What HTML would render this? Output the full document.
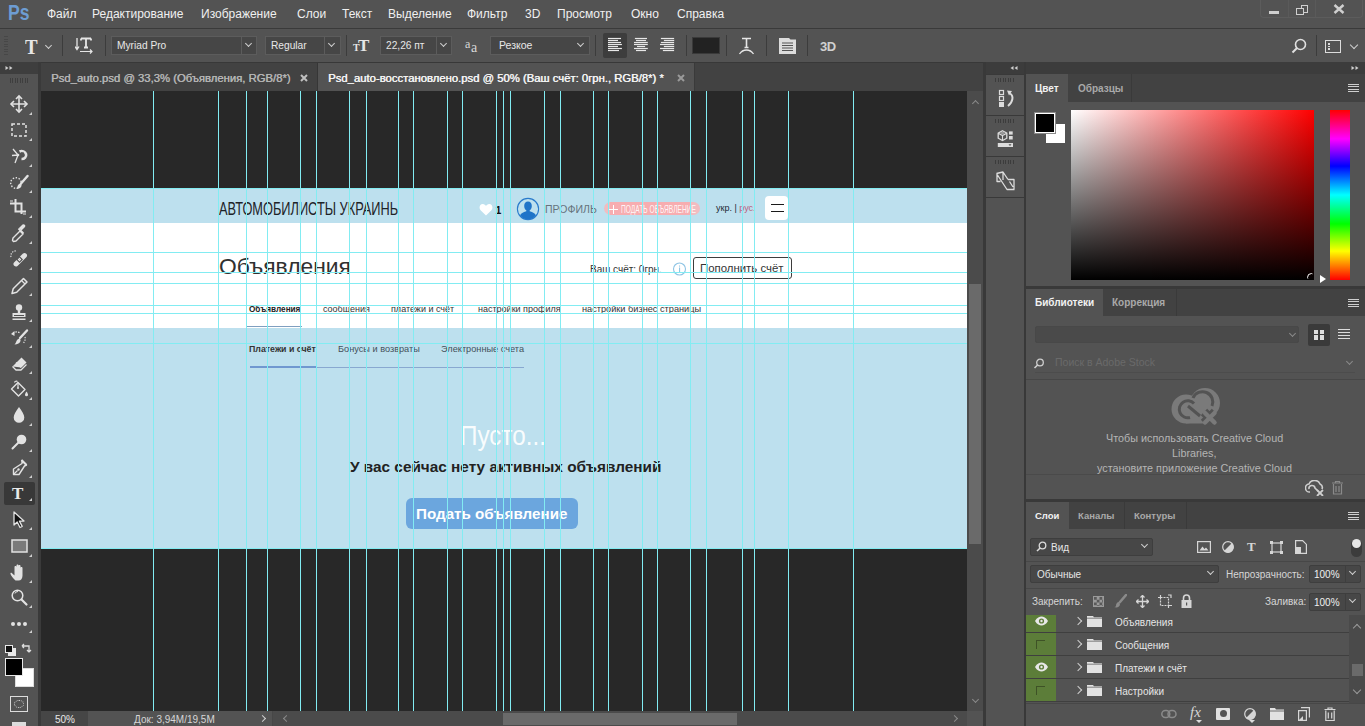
<!DOCTYPE html>
<html><head><meta charset="utf-8">
<style>
*{box-sizing:border-box;margin:0;padding:0}
html,body{width:1365px;height:726px;overflow:hidden;background:#535353;font-family:"Liberation Sans",sans-serif;color:#f0f0f0}
.a{position:absolute}
.t{position:absolute;white-space:nowrap;line-height:1}
#menu{left:0;top:0;width:1365px;height:28px;background:#535353}
#menu .t{font-size:12px;top:8px;color:#f0f0f0}
#opt{left:0;top:28px;width:1365px;height:34px;background:#535353;border-top:1px solid #3a3a3a}
.sep{position:absolute;width:1px;background:#3c3c3c}
.dd{position:absolute;background:#464646;border:1px solid #5c5c5c;height:19px}
.dd .sep{background:#5c5c5c;height:17px!important}
.dd .chev{width:5px;height:5px;top:4px}
.dd .t{font-size:11px;color:#e8e8e8;top:3px;left:5px}
.chev{position:absolute;width:6px;height:6px;border-right:1px solid #cfcfcf;border-bottom:1px solid #cfcfcf;transform:rotate(45deg)}
#tabs{left:41px;top:62px;width:926px;height:29px;background:#424242;border-top:1px solid #383838}
#canvas{left:41px;top:91px;width:926px;height:620px;background:#282828;overflow:hidden}
.gv{position:absolute;top:0;width:1px;height:620px;background:#82ecf2}
.gh{position:absolute;left:0;height:1px;width:926px;background:#82ecf2}
#tool{left:0;top:74px;width:38px;height:652px;background:#535353}
#status{left:41px;top:711px;width:942px;height:15px;background:#535353}
.pnl-tabbar{position:absolute;background:#424242}
</style></head><body>

<!-- MENU BAR -->
<div id="menu" class="a">
  <div class="t" style="left:8px;top:1.5px;font-size:22px;font-weight:700;color:#6d9dd3;transform:scaleX(0.8);transform-origin:0 0">Ps</div>
  <div class="t" style="left:47px">Файл</div>
  <div class="t" style="left:92px">Редактирование</div>
  <div class="t" style="left:201px">Изображение</div>
  <div class="t" style="left:297px">Слои</div>
  <div class="t" style="left:342px">Текст</div>
  <div class="t" style="left:388px">Выделение</div>
  <div class="t" style="left:467px">Фильтр</div>
  <div class="t" style="left:525px">3D</div>
  <div class="t" style="left:557px">Просмотр</div>
  <div class="t" style="left:631px">Окно</div>
  <div class="t" style="left:677px">Справка</div>
</div>


<!-- OPTIONS BAR -->
<div id="opt" class="a">
  <div class="a" style="left:4px;top:7px;width:4px;height:20px;background:repeating-linear-gradient(#474747 0 1px,transparent 1px 2.5px)"></div>
  <div class="t" style="left:24.5px;top:35.5px;font-size:21px;font-weight:700;font-family:'Liberation Serif',serif;color:#e6e6e6;transform:scaleX(0.9);transform-origin:0 0;margin-top:-28px">T</div>
  <div class="chev" style="left:46px;top:14px;width:5px;height:5px"></div>
  <div class="sep" style="left:62px;top:6px;height:21px"></div>
  <svg class="a" style="left:75px;top:8px" width="19" height="18" viewBox="0 0 19 18"><path d="M2 1v11M0 9.5l2 3 2-3" fill="none" stroke="#e6e6e6" stroke-width="1.3"/><path d="M6 1.5h10M11 1.5v9M9 10.5h4M6 1.5v2M16 1.5v2" stroke="#e6e6e6" stroke-width="1.8" fill="none"/><path d="M5 14.5h12M15 12.5l2 2-2 2" fill="none" stroke="#e6e6e6" stroke-width="1.2"/></svg>
  <div class="sep" style="left:105px;top:6px;height:21px"></div>
  <div class="dd" style="left:111px;top:7px;width:146px"><div class="t" style="font-size:10.2px;top:4px">Myriad Pro</div><div class="sep" style="left:129px;top:0;height:16px"></div><div class="chev" style="left:134px;top:4px"></div></div>
  <div class="dd" style="left:265px;top:7px;width:76px"><div class="t" style="font-size:10.2px;top:4px">Regular</div><div class="sep" style="left:58px;top:0;height:16px"></div><div class="chev" style="left:63px;top:4px"></div></div>
  <div class="sep" style="left:346px;top:6px;height:21px"></div>
  <div class="t" style="left:353px;top:14px;font-size:10px;font-weight:700;font-family:'Liberation Serif',serif;color:#e6e6e6">T</div>
  <div class="t" style="left:358px;top:8px;font-size:17px;font-weight:700;font-family:'Liberation Serif',serif;color:#e6e6e6">T</div>
  <div class="dd" style="left:380px;top:7px;width:72px"><div class="t" style="font-size:10.2px;top:4px">22,26 пт</div><div class="sep" style="left:55px;top:0;height:16px"></div><div class="chev" style="left:60px;top:4px"></div></div>
  <div class="t" style="left:465px;top:9px;font-size:12px;font-family:'Liberation Serif',serif;color:#d8d8d8">a</div>
  <div class="t" style="left:471px;top:12px;font-size:14px;font-family:'Liberation Serif',serif;color:#d8d8d8">a</div>
  <div class="dd" style="left:490px;top:7px;width:100px"><div class="t" style="left:8px;font-size:10.5px">Резкое</div><div class="chev" style="left:87px;top:4px"></div></div>
  <div class="sep" style="left:595px;top:6px;height:21px"></div>
  <div class="a" style="left:603px;top:4px;width:24px;height:25px;background:#3d3d3d;border-radius:2px"></div>
  <svg class="a" style="left:0;top:-29px" width="700" height="62" viewBox="0 0 700 62"><rect x="608.0" y="37.9" width="13.0" height="1.2" fill="#e8e8e8"/><rect x="608.0" y="39.9" width="10.0" height="1.2" fill="#e8e8e8"/><rect x="608.0" y="41.9" width="13.0" height="1.2" fill="#e8e8e8"/><rect x="608.0" y="43.9" width="13.9" height="1.2" fill="#e8e8e8"/><rect x="608.0" y="45.9" width="10.0" height="1.2" fill="#e8e8e8"/><rect x="608.0" y="47.9" width="13.9" height="1.2" fill="#e8e8e8"/><rect x="608.0" y="49.9" width="11.0" height="1.2" fill="#e8e8e8"/><rect x="634.9" y="37.9" width="12.1" height="1.2" fill="#e8e8e8"/><rect x="636.0" y="39.9" width="10.0" height="1.2" fill="#e8e8e8"/><rect x="634.0" y="41.9" width="13.8" height="1.2" fill="#e8e8e8"/><rect x="634.0" y="43.9" width="13.8" height="1.2" fill="#e8e8e8"/><rect x="637.0" y="45.9" width="8.1" height="1.2" fill="#e8e8e8"/><rect x="634.0" y="47.9" width="13.8" height="1.2" fill="#e8e8e8"/><rect x="636.0" y="49.9" width="10.0" height="1.2" fill="#e8e8e8"/><rect x="660.9" y="37.9" width="13.2" height="1.2" fill="#e8e8e8"/><rect x="663.9" y="39.9" width="10.3" height="1.2" fill="#e8e8e8"/><rect x="660.9" y="41.9" width="13.2" height="1.2" fill="#e8e8e8"/><rect x="660.0" y="43.9" width="14.1" height="1.2" fill="#e8e8e8"/><rect x="663.9" y="45.9" width="10.3" height="1.2" fill="#e8e8e8"/><rect x="660.0" y="47.9" width="14.1" height="1.2" fill="#e8e8e8"/><rect x="662.9" y="49.9" width="11.2" height="1.2" fill="#e8e8e8"/></svg>
  <div class="sep" style="left:686px;top:6px;height:21px"></div>
  <div class="a" style="left:692px;top:8px;width:28px;height:17px;background:#222;border:1px solid #3a3a3a"></div>
  <div class="sep" style="left:726px;top:6px;height:21px"></div>
  <svg class="a" style="left:738px;top:7px" width="17" height="19" viewBox="0 0 17 19"><path d="M4 2.5h9M8.5 2.5v9M6.5 11.5h4" stroke="#e6e6e6" stroke-width="1.6" fill="none"/><path d="M1.5 18c2-3 4-4 7-4s5 1 7 4" stroke="#e6e6e6" stroke-width="1.3" fill="none"/></svg>
  <div class="sep" style="left:766px;top:6px;height:21px"></div>
  <svg class="a" style="left:779px;top:8px" width="17" height="17" viewBox="0 0 17 17"><path d="M0 1h10l1.5 1.5H17V17H0z" fill="#dcdcdc"/><path d="M3 6h11M3 8.5h11M3 11h11M3 13.5h11" stroke="#535353" stroke-width="1.2"/></svg>
  <div class="sep" style="left:807px;top:6px;height:21px"></div>
  <div class="t" style="left:820px;top:11px;font-size:13px;font-weight:700;color:#d0d0d0;letter-spacing:-0.5px">3D</div>
  <svg class="a" style="left:1291px;top:9px" width="16" height="16" viewBox="0 0 16 16"><circle cx="9.5" cy="6.5" r="5" fill="none" stroke="#e0e0e0" stroke-width="1.6"/><path d="M6 10L1.5 14.5" stroke="#e0e0e0" stroke-width="2"/></svg>
  <div class="sep" style="left:1316px;top:6px;height:21px"></div>
  <div class="a" style="left:1325px;top:11px;width:16px;height:13px;border:1.5px solid #dcdcdc"></div>
  <div class="a" style="left:1328px;top:14px;width:2px;height:7px;background:repeating-linear-gradient(#dcdcdc 0 1.5px,transparent 1.5px 2.5px)"></div>
  <div class="chev" style="left:1351px;top:13px"></div>
</div>

<!-- LEFT TOOLBAR -->
<div class="a" style="left:1260px;top:-2px;width:103px;height:20px;border:1px solid #5c5c5c;border-top:none;border-radius:0 0 4px 4px"></div>
<div class="a" style="left:1288px;top:0;width:1px;height:17px;background:#5a5a5a"></div>
<div class="a" style="left:1315px;top:0;width:1px;height:17px;background:#5a5a5a"></div>
<div class="a" style="left:1269px;top:10.5px;width:10px;height:3px;background:#cfcfcf"></div>
<div class="a" style="left:1300.5px;top:5px;width:7.5px;height:7.5px;border:1.8px solid #cfcfcf"></div>
<div class="a" style="left:1296px;top:8px;width:8px;height:7px;border:1.8px solid #cfcfcf;background:#535353"></div>
<svg class="a" style="left:1333px;top:4px" width="12" height="10" viewBox="0 0 12 10"><path d="M1.5 1l9 8M10.5 1l-9 8" stroke="#cfcfcf" stroke-width="2.4"/></svg>

<div class="a" style="left:0;top:62px;width:38px;height:12px;background:#3e3e3e"></div>
<svg class="a" style="left:5px;top:65px" width="8" height="6" viewBox="0 0 8 6"><path d="M0.5 1l3 2-3 2zM4.5 1l3 2-3 2z" fill="#d0d0d0"/></svg>
<div id="tool" class="a">
  <div class="a" style="left:29px;top:556px;width:0;height:0;border-left:3px solid transparent;border-bottom:3px solid #cfcfcf"></div>
  <div class="a" style="left:10px;top:4px;width:20px;height:5px;background:repeating-linear-gradient(90deg,#3e3e3e 0 1px,transparent 1px 2.5px)"></div>
  <div class="a" style="left:4px;top:408px;width:31px;height:23px;background:#383838;border-radius:2px"></div>
  <div class="t" style="left:12px;top:411px;font-size:17px;font-weight:700;font-family:'Liberation Serif',serif;color:#eaeaea">T</div>
  <div class="a" style="left:29px;top:423.5px;width:0;height:0;border-left:3px solid transparent;border-bottom:3px solid #cfcfcf"></div>
<svg class="a" style="left:9px;top:20px" width="20" height="20" viewBox="0 0 20 20"><path d="M10 2v16M2 10h16" stroke="#e2e2e2" stroke-width="1.6"/><path d="M7 5l3-3 3 3M7 15l3 3 3-3M5 7l-3 3 3 3M15 7l3 3-3 3" fill="none" stroke="#e2e2e2" stroke-width="1.6"/></svg><div class="a" style="left:29px;top:37.5px;width:0;height:0;border-left:3px solid transparent;border-bottom:3px solid #cfcfcf"></div><svg class="a" style="left:9px;top:46px" width="20" height="20" viewBox="0 0 20 20"><rect x="3" y="4" width="14" height="12" fill="none" stroke="#e2e2e2" stroke-width="1.5" stroke-dasharray="3 2"/></svg><div class="a" style="left:29px;top:63.5px;width:0;height:0;border-left:3px solid transparent;border-bottom:3px solid #cfcfcf"></div><svg class="a" style="left:9px;top:72px" width="20" height="20" viewBox="0 0 20 20"><path d="M4 3l5 6M3 9.5l6-0.5M6 17l3-8" stroke="#e2e2e2" stroke-width="1.3" fill="none"/><circle cx="9" cy="9" r="1.3" fill="#e2e2e2"/><path d="M10.5 5.5a4.5 4 0 1 1 2 7.5" stroke="#e2e2e2" stroke-width="2.6" fill="none"/><rect x="12" y="6.5" width="3" height="3" fill="#535353"/></svg><div class="a" style="left:29px;top:89.5px;width:0;height:0;border-left:3px solid transparent;border-bottom:3px solid #cfcfcf"></div><svg class="a" style="left:9px;top:98px" width="20" height="20" viewBox="0 0 20 20"><circle cx="7" cy="11" r="5.3" fill="none" stroke="#e2e2e2" stroke-width="1.4" stroke-dasharray="1.4 1.6"/><path d="M18.5 4L12 11.5" stroke="#e2e2e2" stroke-width="2.4" stroke-linecap="round"/><path d="M9.5 12.5c1.5-1.5 3.5-0.5 3 1.5-0.5 2-3 3-5 3 1-1 0.5-3 2-4.5z" fill="#e2e2e2"/></svg><div class="a" style="left:29px;top:115.5px;width:0;height:0;border-left:3px solid transparent;border-bottom:3px solid #cfcfcf"></div><svg class="a" style="left:9px;top:123px" width="20" height="20" viewBox="0 0 20 20"><path d="M6.5 2v12.5H17M1 6.5h11.5V17" fill="none" stroke="#e2e2e2" stroke-width="2"/><path d="M1 4h3M14 17h3" stroke="#e2e2e2" stroke-width="1.2"/></svg><div class="a" style="left:29px;top:140.5px;width:0;height:0;border-left:3px solid transparent;border-bottom:3px solid #cfcfcf"></div><svg class="a" style="left:9px;top:149px" width="20" height="20" viewBox="0 0 20 20"><path d="M4.5 18.5l-1-1 0.5-2.5 7-7 3 3-7 7z" fill="none" stroke="#e2e2e2" stroke-width="1.4" stroke-linejoin="round"/><path d="M10 6l4 4M9.5 5.5l5 5" stroke="#e2e2e2" stroke-width="1.8"/><path d="M12.5 7.5l3.5-3.5a1.8 1.8 0 0 0-2.5-2.5L10 5z" fill="#e2e2e2"/></svg><div class="a" style="left:29px;top:166.5px;width:0;height:0;border-left:3px solid transparent;border-bottom:3px solid #cfcfcf"></div><svg class="a" style="left:9px;top:175px" width="20" height="20" viewBox="0 0 20 20"><path d="M5 13.5l9-9a2.5 2.5 0 0 1 3.5 3.5l-9 9a2.5 2.5 0 0 1-3.5-3.5z" fill="#e2e2e2"/><rect x="8" y="8" width="5" height="5" transform="rotate(45 10.5 10.5)" fill="#535353"/><circle cx="9.6" cy="10.5" r="0.8" fill="#e2e2e2"/><circle cx="11.4" cy="10.5" r="0.8" fill="#e2e2e2"/><circle cx="10.5" cy="9.6" r="0.8" fill="#e2e2e2"/><circle cx="10.5" cy="11.4" r="0.8" fill="#e2e2e2"/><path d="M2 8a5 5 0 0 1 6-6" fill="none" stroke="#e2e2e2" stroke-width="1.2" stroke-dasharray="1.2 1.3"/></svg><div class="a" style="left:29px;top:192.5px;width:0;height:0;border-left:3px solid transparent;border-bottom:3px solid #cfcfcf"></div><svg class="a" style="left:9px;top:201px" width="20" height="20" viewBox="0 0 20 20"><path d="M3 18.5l1.2-4.7L14.5 3.5l3.5 3.5L7.7 17.3z" fill="none" stroke="#e2e2e2" stroke-width="1.5" stroke-linejoin="round"/><path d="M12.5 5.5l3.5 3.5" stroke="#e2e2e2" stroke-width="1.2"/></svg><div class="a" style="left:29px;top:218.5px;width:0;height:0;border-left:3px solid transparent;border-bottom:3px solid #cfcfcf"></div><svg class="a" style="left:9px;top:227px" width="20" height="20" viewBox="0 0 20 20"><circle cx="10" cy="6.5" r="3.2" fill="#e2e2e2"/><path d="M8.8 8.5h2.4V12H8.8z" fill="#e2e2e2"/><rect x="3.5" y="12" width="13" height="4" fill="#e2e2e2"/><rect x="5" y="14" width="10" height="1" fill="#535353"/><rect x="3.5" y="17.5" width="13" height="1.5" fill="#e2e2e2"/></svg><div class="a" style="left:29px;top:244.5px;width:0;height:0;border-left:3px solid transparent;border-bottom:3px solid #cfcfcf"></div><svg class="a" style="left:9px;top:253px" width="20" height="20" viewBox="0 0 20 20"><path d="M18 3.5L11 11" stroke="#e2e2e2" stroke-width="2.4" stroke-linecap="round"/><path d="M8.5 12.5c1.5-1.5 3.5-0.5 3 1.5-0.5 2-3 3.5-6 3.5 1.5-1 1.5-3.5 3-5z" fill="#e2e2e2"/><path d="M4 6.5c2-2 5-2 7-0.5" fill="none" stroke="#e2e2e2" stroke-width="1.3" stroke-dasharray="1.5 1.2"/><path d="M2 7l3.5-3v5z" fill="#e2e2e2"/><path d="M16 10a7 7 0 0 1-1.5 6" fill="none" stroke="#e2e2e2" stroke-width="1.2" stroke-dasharray="1.2 1.3"/></svg><div class="a" style="left:29px;top:270.5px;width:0;height:0;border-left:3px solid transparent;border-bottom:3px solid #cfcfcf"></div><svg class="a" style="left:9px;top:279px" width="20" height="20" viewBox="0 0 20 20"><path d="M3.5 13.5l9-9 5 5-5 5" fill="#e2e2e2"/><path d="M3.5 13.5l3.5 3.5h5l5.5-5.5" fill="none" stroke="#e2e2e2" stroke-width="1.3" stroke-linejoin="round"/><path d="M7 9.5l5 5" stroke="#e2e2e2" stroke-width="1.3"/></svg><div class="a" style="left:29px;top:296.5px;width:0;height:0;border-left:3px solid transparent;border-bottom:3px solid #cfcfcf"></div><svg class="a" style="left:9px;top:305px" width="20" height="20" viewBox="0 0 20 20"><path d="M2.5 10l6.5-6.5 7 7-6.5 6.5z" fill="none" stroke="#e2e2e2" stroke-width="1.4" stroke-linejoin="round"/><path d="M9 3.5v5" stroke="#e2e2e2" stroke-width="1.2"/><circle cx="9" cy="9" r="1" fill="#e2e2e2"/><path d="M8.5 2.5a2 2 0 0 0-3 1" fill="none" stroke="#e2e2e2" stroke-width="1.2"/><path d="M17.5 12.5c1 1.5 1.5 2.5 1.5 3.2a1.5 1.5 0 0 1-3 0c0-0.7 0.5-1.7 1.5-3.2z" fill="#e2e2e2"/></svg><div class="a" style="left:29px;top:322.5px;width:0;height:0;border-left:3px solid transparent;border-bottom:3px solid #cfcfcf"></div><svg class="a" style="left:9px;top:331px" width="20" height="20" viewBox="0 0 20 20"><path d="M10 2c-3 4.5-5.3 7.5-5.3 10.5a5.3 5.3 0 0 0 10.6 0C15.3 9.5 13 6.5 10 2z" fill="#e2e2e2"/></svg><div class="a" style="left:29px;top:348.5px;width:0;height:0;border-left:3px solid transparent;border-bottom:3px solid #cfcfcf"></div><svg class="a" style="left:9px;top:357px" width="20" height="20" viewBox="0 0 20 20"><circle cx="12.5" cy="8.5" r="4.8" fill="#e2e2e2"/><path d="M9.5 11.5L3.5 17.5" stroke="#e2e2e2" stroke-width="2" stroke-linecap="round"/></svg><div class="a" style="left:29px;top:374.5px;width:0;height:0;border-left:3px solid transparent;border-bottom:3px solid #cfcfcf"></div><svg class="a" style="left:9px;top:383px" width="20" height="20" viewBox="0 0 20 20"><path d="M13 3.5l4.5 4.5-2 1-5.5 8.5H4.5v-5.5l8.5-5.5z" fill="none" stroke="#e2e2e2" stroke-width="1.4" stroke-linejoin="round"/><path d="M4.5 17.5l4-4" stroke="#e2e2e2" stroke-width="1.1"/><circle cx="9.5" cy="12.5" r="1.2" fill="#e2e2e2"/><path d="M12.5 3l5 5" stroke="#e2e2e2" stroke-width="2"/></svg><div class="a" style="left:29px;top:400.5px;width:0;height:0;border-left:3px solid transparent;border-bottom:3px solid #cfcfcf"></div><svg class="a" style="left:9px;top:435px" width="20" height="20" viewBox="0 0 20 20"><path d="M5 3v13l3.2-3 2.8 5.5 2.2-1.1-2.8-5.3H15z" fill="#111" stroke="#e2e2e2" stroke-width="1.3" stroke-linejoin="round"/></svg><div class="a" style="left:29px;top:452.5px;width:0;height:0;border-left:3px solid transparent;border-bottom:3px solid #cfcfcf"></div><svg class="a" style="left:9px;top:462px" width="20" height="20" viewBox="0 0 20 20"><rect x="3" y="4" width="15" height="12" fill="#7a7a7a" stroke="#e2e2e2" stroke-width="1.5"/></svg><div class="a" style="left:29px;top:479.5px;width:0;height:0;border-left:3px solid transparent;border-bottom:3px solid #cfcfcf"></div><svg class="a" style="left:9px;top:488px" width="20" height="20" viewBox="0 0 20 20"><path d="M6.5 18.5C4.5 17 2 13.5 1.5 12c-0.3-1 0.7-1.5 1.5-0.8L5.5 13.5V5c0-1.3 2-1.3 2 0v6V3.5c0-1.3 2-1.3 2 0V11V4c0-1.3 2-1.3 2 0v7V6c0-1.3 2-1.3 2 0v7.5c0 3-1.5 5-4 5z" fill="#e2e2e2"/></svg><div class="a" style="left:29px;top:505.5px;width:0;height:0;border-left:3px solid transparent;border-bottom:3px solid #cfcfcf"></div><svg class="a" style="left:9px;top:513px" width="20" height="20" viewBox="0 0 20 20"><circle cx="8.5" cy="8.5" r="5.3" fill="none" stroke="#e2e2e2" stroke-width="1.5"/><path d="M12.5 12.5l5 5" stroke="#e2e2e2" stroke-width="2.2" stroke-linecap="round"/><path d="M6 6.5a3 3 0 0 1 3-2" fill="none" stroke="#e2e2e2" stroke-width="1"/></svg><div class="a" style="left:29px;top:530.5px;width:0;height:0;border-left:3px solid transparent;border-bottom:3px solid #cfcfcf"></div><svg class="a" style="left:9px;top:540px" width="20" height="20" viewBox="0 0 20 20"><circle cx="4" cy="10" r="2" fill="#e2e2e2"/><circle cx="10" cy="10" r="2" fill="#e2e2e2"/><circle cx="16" cy="10" r="2" fill="#e2e2e2"/></svg>
  <div class="a" style="left:8px;top:574px;width:8px;height:8px;background:#e8e8e8"></div>
  <div class="a" style="left:4.5px;top:570.5px;width:8px;height:8px;background:#111;border:1px solid #e8e8e8"></div>
  <svg class="a" style="left:20px;top:568px" width="12" height="12" viewBox="0 0 12 12"><path d="M2 4h7v6M2 4l2-2M2 4l2 2M9 10l-2-2M9 10l2-2" fill="none" stroke="#ddd" stroke-width="1.3"/></svg>
  <div class="a" style="left:15px;top:594px;width:19px;height:19px;background:#fff;border:1px solid #ddd"></div>
  <div class="a" style="left:5px;top:584px;width:18px;height:18px;background:#000;border:1px solid #e8e8e8"></div>
  <div class="a" style="left:10px;top:622px;width:18px;height:16px;border:1.5px solid #dcdcdc"></div>
  <div class="a" style="left:14px;top:626px;width:10px;height:8px;border:1.2px dotted #dcdcdc;border-radius:50%"></div>
  <div class="a" style="left:12px;top:648px;width:14px;height:4px;background:#dcdcdc"></div>
</div>
<div class="a" style="left:38px;top:62px;width:3px;height:664px;background:#3a3a3a"></div>

<!-- TABS -->
<div id="tabs" class="a">
  <div class="t" style="left:10px;top:9.5px;font-size:11.3px;color:#b4b4b4;text-shadow:0.4px 0 0 #b4b4b4">Psd_auto.psd @ 33,3% (Объявления, RGB/8*)</div>
  <svg class="a" style="left:259px;top:11px" width="8" height="8" viewBox="0 0 8 8"><path d="M1 1l6 6M7 1L1 7" stroke="#c0c0c0" stroke-width="2"/></svg>
  <div class="a" style="left:276px;top:0;width:1px;height:29px;background:#363636"></div>
  <div class="a" style="left:277px;top:0;width:376px;height:29px;background:#535353"></div>
  <div class="t" style="left:287px;top:9.5px;font-size:11.3px;color:#f4f4f4;text-shadow:0.4px 0 0 #f4f4f4">Psd_auto-восстановлено.psd @ 50% (Ваш счёт: 0грн., RGB/8*) *</div>
  <svg class="a" style="left:636px;top:11px" width="8" height="8" viewBox="0 0 8 8"><path d="M1 1l6 6M7 1L1 7" stroke="#9a9a9a" stroke-width="2"/></svg>
  <div class="a" style="left:653px;top:0;width:1px;height:29px;background:#3a3a3a"></div>
</div>

<!-- CANVAS -->
<div id="canvas" class="a">
 <div class="a" style="left:-41px;top:-91px;width:1365px;height:726px">
  <!-- document -->
  <div class="a" style="left:41px;top:188px;width:926px;height:35px;background:#bde0ee"></div>
  <div class="a" style="left:41px;top:223px;width:926px;height:105px;background:#ffffff"></div>
  <div class="a" style="left:41px;top:328px;width:926px;height:220px;background:#bde0ee"></div>
  <!-- header -->
  <div class="t" style="left:219px;top:200px;font-size:18px;color:#1e2328;transform:scaleX(0.71);transform-origin:0 0">АВТОМОБИЛИСТЫ УКРАИНЬ</div>
  <svg class="a" style="left:479px;top:203px" width="14" height="13" viewBox="0 0 14 13"><path d="M7 12.5 L1.6 7.2 C-0.4 5.2 0.6 1 3.8 1 C5.4 1 6.4 2 7 3 C7.6 2 8.6 1 10.2 1 C13.4 1 14.4 5.2 12.4 7.2 Z" fill="#fff"/></svg>
  <div class="t" style="left:495.5px;top:204.5px;font-size:10.5px;font-weight:700;color:#111">1</div>
  <svg class="a" style="left:516px;top:197px" width="24" height="24" viewBox="0 0 24 24"><circle cx="12" cy="12" r="10.6" fill="none" stroke="#2a7bcc" stroke-width="1.1"/><path d="M12 4.6c2.4 0 3.8 1.9 3.8 4.3 0 2-1 3.7-2.1 4.4v.9c3.2.8 5.6 2.2 6.2 4.2A10 10 0 0 1 12 22a10 10 0 0 1-7.9-3.6c.6-2 3-3.4 6.2-4.2v-.9C9.2 12.6 8.2 10.9 8.2 8.9c0-2.4 1.4-4.3 3.8-4.3z" fill="#1f74c8"/></svg>
  <div class="t" style="left:545px;top:204px;font-size:10.5px;color:#66737c;transform:scaleX(1.0);transform-origin:0 0">ПРОФИЛЬ</div>
  <div class="a" style="left:604px;top:202px;width:96px;height:13px;border-radius:7px;background:#f2bcc0"></div>
  <div class="a" style="left:610px;top:202px;width:33px;height:13px;background:#f7adb0"></div>
  <div class="a" style="left:644px;top:202px;width:12px;height:13px;background:#f7adb0"></div>
  <div class="a" style="left:658px;top:202px;width:33px;height:13px;background:#f7adb0"></div>
  <div class="a" style="left:609px;top:208.5px;width:9px;height:1px;background:#fff"></div><div class="a" style="left:613px;top:205px;width:1px;height:9px;background:#fff"></div>
  <div class="t" style="left:620.5px;top:204.4px;font-size:10.5px;color:rgba(255,255,255,0.9);transform:scaleX(0.635);transform-origin:0 0">ПОДАТЬ ОБЪЯВЛЕНИЕ</div>
  <div class="t" style="left:716px;top:204px;font-size:9px;color:#1d2a35">укр. | <span style="color:#b8637f">рус.</span></div>
  <div class="a" style="left:765px;top:196px;width:23px;height:24px;border-radius:4px;background:#fff"></div>
  <div class="a" style="left:771px;top:204px;width:13px;height:1.2px;background:#1a1a1a"></div>
  <div class="a" style="left:771px;top:211px;width:13px;height:1.2px;background:#1a1a1a"></div>
  <!-- title row -->
  <div class="t" style="left:219px;top:255.3px;font-size:22.8px;color:#303030">Объявления</div>
  <div class="t" style="left:590px;top:265px;font-size:10px;color:#333">Ваш счёт: 0грн.</div>
  <svg class="a" style="left:672px;top:262px" width="15" height="14" viewBox="0 0 15 14"><circle cx="7.5" cy="7" r="6" fill="none" stroke="#8ec4e4" stroke-width="1.1"/><rect x="7" y="5.5" width="1.1" height="4.5" fill="#8ec4e4"/><rect x="7" y="3.5" width="1.1" height="1.1" fill="#8ec4e4"/></svg>
  <div class="a" style="left:693px;top:257px;width:99px;height:22px;border:1.7px solid #3d3d3d;border-radius:3px;background:#fff"></div>
  <div class="t" style="left:700px;top:263px;font-size:11.4px;color:#333">Пополнить счёт</div>
  <!-- nav -->
  <div class="t" style="left:249px;top:305.5px;font-size:8.2px;font-weight:700;color:#222">Объявления</div>
  <div class="t" style="left:323px;top:304.5px;font-size:9px;color:#333">сообщения</div>
  <div class="t" style="left:391px;top:304.5px;font-size:9px;color:#333">платежи и счёт</div>
  <div class="t" style="left:478px;top:304.5px;font-size:9px;color:#333">настройки профиля</div>
  <div class="t" style="left:582px;top:304.5px;font-size:9.2px;color:#333">настройки бизнес страницы</div>
  <div class="a" style="left:247px;top:326px;width:55px;height:1px;background:#7f9fc0"></div>
  <!-- sub nav -->
  <div class="t" style="left:249px;top:345px;font-size:8.8px;font-weight:700;color:#333">Платежи и счёт</div>
  <div class="t" style="left:338px;top:345px;font-size:9.2px;color:#44505a">Бонусы и возвраты</div>
  <div class="t" style="left:441px;top:345px;font-size:9.2px;color:#44505a">Электронные счета</div>
  <div class="a" style="left:250px;top:366px;width:66px;height:2px;background:#7098d0"></div>
  <div class="a" style="left:316px;top:367px;width:208px;height:1px;background:#88a8d0"></div>
  <!-- empty state -->
  <div class="t" style="left:460px;top:423px;font-size:27px;color:rgba(255,255,255,0.92);transform:scaleX(0.9);transform-origin:0 0">Пусто...</div>
  <div class="t" style="left:350px;top:459px;font-size:15.35px;font-weight:700;color:#222">У вас сейчас нету активных объявлений</div>
  <div class="a" style="left:406px;top:498px;width:172px;height:31px;border-radius:6px;background:#6ba6de"></div>
  <div class="t" style="left:416px;top:506px;font-size:15.2px;font-weight:700;color:#fff">Подать объявление</div>
  <!-- guides -->
<div class="gv" style="top:91px;left:153px"></div><div class="gv" style="top:91px;left:218px"></div><div class="gv" style="top:91px;left:246px"></div><div class="gv" style="top:91px;left:267px"></div><div class="gv" style="top:91px;left:300px"></div><div class="gv" style="top:91px;left:316px"></div><div class="gv" style="top:91px;left:349px"></div><div class="gv" style="top:91px;left:366px"></div><div class="gv" style="top:91px;left:398px"></div><div class="gv" style="top:91px;left:413px"></div><div class="gv" style="top:91px;left:447px"></div><div class="gv" style="top:91px;left:462px"></div><div class="gv" style="top:91px;left:496px"></div><div class="gv" style="top:91px;left:503px"></div><div class="gv" style="top:91px;left:510px"></div><div class="gv" style="top:91px;left:544px"></div><div class="gv" style="top:91px;left:560px"></div><div class="gv" style="top:91px;left:593px"></div><div class="gv" style="top:91px;left:608px"></div><div class="gv" style="top:91px;left:642px"></div><div class="gv" style="top:91px;left:657px"></div><div class="gv" style="top:91px;left:690px"></div><div class="gv" style="top:91px;left:706px"></div><div class="gv" style="top:91px;left:742px"></div><div class="gv" style="top:91px;left:754px"></div><div class="gv" style="top:91px;left:788px"></div><div class="gv" style="top:91px;left:853px"></div><div class="gh" style="left:41px;top:188px"></div><div class="gh" style="left:41px;top:252px"></div><div class="gh" style="left:41px;top:272px"></div><div class="gh" style="left:41px;top:283px"></div><div class="gh" style="left:41px;top:305px"></div><div class="gh" style="left:41px;top:313px"></div><div class="gh" style="left:41px;top:343px"></div><div class="gh" style="left:41px;top:548px"></div>
 </div>
</div>

<!-- SCROLLBARS / STATUS -->
<div id="status" class="a">
  <div class="a" style="left:0;top:0;width:47px;height:15px;background:#464646"></div>
  <div class="t" style="left:14px;top:4px;font-size:10px;color:#e8e8e8">50%</div>
  <div class="t" style="left:93px;top:4px;font-size:10px;color:#d6d6d6">Док: 3,94M/19,5M</div>
  <div class="a" style="left:219px;top:5px;width:5px;height:5px;border-right:1px solid #d0d0d0;border-top:1px solid #d0d0d0;transform:rotate(45deg)"></div>
  <div class="a" style="left:231px;top:0;width:1px;height:15px;background:#474747"></div>
  <div class="a" style="left:232px;top:0;width:694px;height:15px;background:#4b4b4b"></div>
  <div class="a" style="left:243px;top:5px;width:5px;height:5px;border-left:1px solid #8a8a8a;border-bottom:1px solid #8a8a8a;transform:rotate(45deg)"></div>
  <div class="a" style="left:462px;top:2px;width:234px;height:12px;background:#6a6a6a"></div>
  <div class="a" style="left:911px;top:5px;width:5px;height:5px;border-right:1px solid #8a8a8a;border-top:1px solid #8a8a8a;transform:rotate(45deg)"></div>
  <div class="a" style="left:926px;top:0;width:16px;height:15px;background:#535353"></div>
</div>
<!-- V SCROLL -->
<div class="a" style="left:967px;top:91px;width:16px;height:620px;background:#4b4b4b"></div>
<div class="a" style="left:973px;top:101px;width:5px;height:5px;border-left:1px solid #8a8a8a;border-top:1px solid #8a8a8a;transform:rotate(45deg)"></div>
<div class="a" style="left:969px;top:284px;width:12px;height:260px;background:#6a6a6a"></div>
<div class="a" style="left:973px;top:697px;width:5px;height:5px;border-right:1px solid #8a8a8a;border-bottom:1px solid #8a8a8a;transform:rotate(45deg)"></div>
<div class="a" style="left:967px;top:62px;width:16px;height:29px;background:#424242;border-top:1px solid #383838"></div>



<!-- RIGHT DOCK -->
<div class="a" style="left:983px;top:62px;width:3px;height:664px;background:#393939"></div>
<div class="a" style="left:986px;top:62px;width:38px;height:12px;background:#3c3c3c"></div>
<svg class="a" style="left:1010px;top:65px" width="8" height="6" viewBox="0 0 8 6"><path d="M3.5 1l-3 2 3 2zM7.5 1l-3 2 3 2z" fill="#d0d0d0"/></svg>
<div class="a" style="left:986px;top:74px;width:38px;height:652px;background:#535353;border-top:1px solid #393939"></div>
<div class="a" style="left:986px;top:115px;width:38px;height:1px;background:#393939"></div>
<div class="a" style="left:986px;top:156px;width:38px;height:1px;background:#393939"></div>
<div class="a" style="left:986px;top:197px;width:38px;height:1px;background:#393939"></div>
<div class="a" style="left:995px;top:78px;width:20px;height:4px;background:repeating-linear-gradient(90deg,#3c3c3c 0 1px,transparent 1px 2.5px)"></div>
<div class="a" style="left:995px;top:119px;width:20px;height:4px;background:repeating-linear-gradient(90deg,#3c3c3c 0 1px,transparent 1px 2.5px)"></div>
<div class="a" style="left:995px;top:160px;width:20px;height:4px;background:repeating-linear-gradient(90deg,#3c3c3c 0 1px,transparent 1px 2.5px)"></div>
<svg class="a" style="left:998px;top:89px" width="18" height="19" viewBox="0 0 18 19"><rect x="1.5" y="1.5" width="4" height="4" fill="none" stroke="#dcdcdc" stroke-width="1.2"/><rect x="1.5" y="7.5" width="4" height="4" fill="none" stroke="#dcdcdc" stroke-width="1.2"/><rect x="1" y="13" width="5" height="5" fill="#dcdcdc"/><path d="M10 17C15 13 16 7 12 4.5" fill="none" stroke="#dcdcdc" stroke-width="2"/><path d="M9 1.5l5 0.5-3 4.5z" fill="#dcdcdc"/></svg>
<svg class="a" style="left:996px;top:129px" width="18" height="20" viewBox="0 0 18 20"><path d="M6.5 1.8l4.3 2.4v5l-4.3 2.4-4.3-2.4v-5z" fill="none" stroke="#dcdcdc" stroke-width="1.3"/><path d="M2.2 4.2l4.3 2.4 4.3-2.4M6.5 6.6v5" stroke="#dcdcdc" stroke-width="1.1" fill="none"/><path d="M3.5 4l3-1.5 3 1.5-3 1.5z" fill="#9a9a9a"/><rect x="13" y="2.4" width="3.7" height="3.2" fill="#dcdcdc"/><rect x="13" y="7" width="3.7" height="3.5" fill="#dcdcdc"/><rect x="1.8" y="14" width="15.2" height="4" fill="#dcdcdc"/><path d="M12.5 15.2h3l-1.5 1.8z" fill="#535353"/></svg>
<svg class="a" style="left:995px;top:170px" width="21" height="21" viewBox="0 0 21 21"><path d="M1.5 3.5L8 2l5 7.5M1.5 3.5L12 19.5h7.5M2 4v7.5h3.5M13 9.5h6v10M14.5 11.5l3.5 5.5M8 2v8" stroke="#dcdcdc" stroke-width="1.3" fill="none" stroke-linejoin="round"/></svg>
<div class="a" style="left:1024px;top:62px;width:2px;height:664px;background:#393939"></div>
<div class="a" style="left:1026px;top:62px;width:339px;height:12px;background:#3c3c3c"></div>
<svg class="a" style="left:1351px;top:65px" width="8" height="6" viewBox="0 0 8 6"><path d="M0.5 1l3 2-3 2zM4.5 1l3 2-3 2z" fill="#d0d0d0"/></svg>

<!-- COLOR PANEL -->
<div class="a" style="left:1026px;top:74px;width:339px;height:28px;background:#424242"></div>
<div class="a" style="left:1026px;top:74px;width:42px;height:28px;background:#535353"></div>
<div class="a" style="left:1131px;top:74px;width:1px;height:28px;background:#3a3a3a"></div>
<div class="t" style="left:1035px;top:84px;font-size:10px;font-weight:700;color:#f2f2f2">Цвет</div>
<div class="t" style="left:1078px;top:84px;font-size:10px;font-weight:700;color:#a9a9a9">Образцы</div>
<div class="a" style="left:1348px;top:84px;width:11px;height:8px;background:repeating-linear-gradient(#cfcfcf 0 1px,transparent 1px 2.33px)"></div>
<div class="a" style="left:1026px;top:102px;width:339px;height:184px;background:#535353"></div>
<div class="a" style="left:1046px;top:124px;width:19px;height:19px;background:#fff"></div>
<div class="a" style="left:1035px;top:113px;width:20px;height:20px;background:#000;border:1px solid #fff;outline:1px solid #8a8a8a"></div>
<div class="a" style="left:1071px;top:110px;width:243px;height:170px;background:linear-gradient(to top,#000,rgba(0,0,0,0)),linear-gradient(to right,#fff,#f00)"></div>
<div class="a" style="left:1307px;top:273px;width:9px;height:9px;border:1.2px solid #fff;border-radius:50%;clip-path:polygon(0 0,60% 0,60% 60%,0 60%)"></div>
<div class="a" style="left:1330px;top:110px;width:20px;height:170px;background:linear-gradient(#f00 0%,#f0f 17%,#00f 33%,#0ff 50%,#0f0 67%,#ff0 83%,#f00 100%)"></div>
<div class="a" style="left:1320px;top:275px;width:0;height:0;border-top:4px solid transparent;border-bottom:4px solid transparent;border-left:6px solid #fff"></div>
<div class="a" style="left:1026px;top:286px;width:339px;height:3px;background:#393939"></div>

<!-- LIBRARIES PANEL -->
<div class="a" style="left:1026px;top:289px;width:339px;height:27px;background:#424242"></div>
<div class="a" style="left:1026px;top:289px;width:77px;height:27px;background:#535353"></div>
<div class="a" style="left:1176px;top:289px;width:1px;height:27px;background:#3a3a3a"></div>
<div class="t" style="left:1035px;top:298px;font-size:10px;font-weight:700;color:#f2f2f2">Библиотеки</div>
<div class="t" style="left:1112px;top:298px;font-size:10px;font-weight:700;color:#a9a9a9">Коррекция</div>
<div class="a" style="left:1348px;top:299px;width:11px;height:8px;background:repeating-linear-gradient(#cfcfcf 0 1px,transparent 1px 2.33px)"></div>
<div class="a" style="left:1026px;top:316px;width:339px;height:158px;background:#535353"></div>
<div class="a" style="left:1035px;top:326px;width:264px;height:17px;background:#4a4a4a;border:1px solid #484848;border-radius:2px"></div>
<div class="chev" style="left:1290px;top:331px;width:5px;height:5px;border-color:#8a8a8a"></div>
<div class="a" style="left:1308px;top:324px;width:22px;height:22px;background:#3a3a3a;border-radius:2px"></div>
<div class="a" style="left:1314px;top:330px;width:10px;height:10px;background:linear-gradient(90deg,transparent 45%,#3a3a3a 45% 55%,transparent 55%),linear-gradient(transparent 45%,#3a3a3a 45% 55%,transparent 55%),#dcdcdc"></div>
<div class="a" style="left:1338px;top:329px;width:12px;height:11px;background:repeating-linear-gradient(#dcdcdc 0 1.5px,transparent 1.5px 3px)"></div>
<svg class="a" style="left:1033px;top:358px" width="12" height="11" viewBox="0 0 12 11"><circle cx="7" cy="4.5" r="3.3" fill="none" stroke="#cfcfcf" stroke-width="1.3"/><path d="M4.6 7L1.5 10" stroke="#cfcfcf" stroke-width="1.6"/></svg>
<div class="t" style="left:1055px;top:357px;font-size:10.5px;color:#6a6a6a">Поиск в Adobe Stock</div>
<div class="chev" style="left:1347px;top:359px;width:5px;height:5px;border-color:#8a8a8a"></div>
<div class="a" style="left:1035px;top:372px;width:320px;height:1px;background:#4c4c4c"></div>
<div class="a" style="left:1026px;top:379px;width:339px;height:1px;background:#474747"></div>
<svg class="a" style="left:1170px;top:386px" width="52" height="42" viewBox="0 0 52 42"><circle cx="16" cy="23" r="14.5" fill="#7a7a7a"/><circle cx="35" cy="17" r="15" fill="#7a7a7a"/><rect x="16" y="17" width="19" height="20.5" fill="#7a7a7a"/><path d="M24 17.5A8.5 8.5 0 1 0 20 31.5" fill="none" stroke="#535353" stroke-width="3"/><path d="M23 12A10 10 0 0 1 42 20" fill="none" stroke="#535353" stroke-width="3"/><path d="M18 20L30 30" stroke="#535353" stroke-width="3"/><path d="M34 26l11 11M45 26L34 37" stroke="#535353" stroke-width="9"/><path d="M35 27l9.5 9.5M44.5 27L35 36.5" stroke="#7a7a7a" stroke-width="4.5" stroke-linecap="round"/></svg>
<div class="t" style="left:1106px;top:433px;font-size:10.8px;color:#b5b5b5">Чтобы использовать Creative Cloud</div>
<div class="t" style="left:1172px;top:448px;font-size:10.8px;color:#b5b5b5">Libraries,</div>
<div class="t" style="left:1097px;top:463px;font-size:10.8px;color:#b5b5b5">установите приложение Creative Cloud</div>
<div class="a" style="left:1026px;top:474px;width:339px;height:25px;background:#535353;border-top:1px solid #4a4a4a"></div>
<svg class="a" style="left:1305px;top:480px" width="19" height="16" viewBox="0 0 19 16"><path d="M5 12a4 4 0 0 1-1-8A6 6 0 0 1 15 4a4 4 0 0 1 2 5" fill="none" stroke="#cfcfcf" stroke-width="1.6"/><path d="M4 9a3 3 0 0 1 6-1l3 3" fill="none" stroke="#cfcfcf" stroke-width="1.6"/><path d="M12 10l6 6M18 10l-6 6" stroke="#cfcfcf" stroke-width="1.8"/></svg>
<svg class="a" style="left:1331px;top:480px" width="13" height="15" viewBox="0 0 13 15"><path d="M1 3h11M4.5 3V1.5h4V3M2.5 4v10h8V4M5 6v6M8 6v6" fill="none" stroke="#8a8a8a" stroke-width="1.2"/></svg>
<div class="a" style="left:1026px;top:499px;width:339px;height:3px;background:#393939"></div>


<!-- LAYERS PANEL -->
<div class="a" style="left:1026px;top:502px;width:339px;height:27px;background:#424242"></div>
<div class="a" style="left:1026px;top:502px;width:43px;height:27px;background:#535353"></div>
<div class="a" style="left:1124px;top:502px;width:1px;height:27px;background:#3a3a3a"></div>
<div class="a" style="left:1186px;top:502px;width:1px;height:27px;background:#3a3a3a"></div>
<div class="t" style="left:1035px;top:511px;font-size:9.5px;font-weight:700;color:#f2f2f2">Слои</div>
<div class="t" style="left:1078px;top:511px;font-size:9.5px;font-weight:700;color:#a9a9a9">Каналы</div>
<div class="t" style="left:1134px;top:511px;font-size:9.5px;font-weight:700;color:#a9a9a9">Контуры</div>
<div class="a" style="left:1348px;top:512px;width:11px;height:8px;background:repeating-linear-gradient(#cfcfcf 0 1px,transparent 1px 2.33px)"></div>
<div class="a" style="left:1026px;top:529px;width:339px;height:197px;background:#535353"></div>
<div class="a" style="left:1030px;top:538px;width:123px;height:18px;background:#474747;border:1px solid #3e3e3e;border-radius:2px"></div>
<svg class="a" style="left:1036px;top:541px" width="11" height="11" viewBox="0 0 11 11"><circle cx="6.5" cy="4.5" r="3.3" fill="none" stroke="#dcdcdc" stroke-width="1.3"/><path d="M4.2 7L1 10" stroke="#dcdcdc" stroke-width="1.6"/></svg>
<div class="t" style="left:1051px;top:543px;font-size:10px;color:#e6e6e6">Вид</div>
<div class="chev" style="left:1142px;top:542px;width:5px;height:5px"></div>
<svg class="a" style="left:1197px;top:541px" width="14" height="12" viewBox="0 0 14 12"><rect x="0.6" y="0.6" width="12.8" height="10.8" fill="none" stroke="#d6d6d6" stroke-width="1.2"/><path d="M2.5 9.5l3-4 2 2.5 1.5-1.5 2.5 3z" fill="#d6d6d6"/></svg>
<svg class="a" style="left:1222px;top:541px" width="12" height="12" viewBox="0 0 12 12"><circle cx="6" cy="6" r="5.3" fill="none" stroke="#d6d6d6" stroke-width="1.2"/><path d="M10 2L2 10A5.3 5.3 0 0 0 10 2z" fill="#d6d6d6"/></svg>
<div class="t" style="left:1247px;top:540px;font-size:13px;font-weight:700;font-family:'Liberation Serif',serif;color:#d6d6d6">T</div>
<svg class="a" style="left:1270px;top:541px" width="13" height="13" viewBox="0 0 13 13"><rect x="2" y="2" width="9" height="9" fill="none" stroke="#d6d6d6" stroke-width="1.2"/><rect x="0" y="0" width="3" height="3" fill="#d6d6d6"/><rect x="10" y="0" width="3" height="3" fill="#d6d6d6"/><rect x="0" y="10" width="3" height="3" fill="#d6d6d6"/><rect x="10" y="10" width="3" height="3" fill="#d6d6d6"/></svg>
<svg class="a" style="left:1295px;top:540px" width="12" height="14" viewBox="0 0 12 14"><path d="M0.6 0.6h7l3.8 3.8v9H0.6z" fill="none" stroke="#d6d6d6" stroke-width="1.2"/><rect x="0" y="7" width="6" height="7" fill="#d6d6d6"/></svg>
<div class="a" style="left:1351px;top:539px;width:11px;height:18px;border-radius:6px;background:#3c3c3c"></div>
<div class="a" style="left:1352px;top:539px;width:9px;height:9px;border-radius:50%;background:#e6e6e6"></div>
<div class="a" style="left:1026px;top:561px;width:339px;height:1px;background:#474747"></div>
<div class="a" style="left:1030px;top:565px;width:189px;height:18px;background:#474747;border:1px solid #3e3e3e;border-radius:2px"></div>
<div class="t" style="left:1037px;top:570px;font-size:10px;color:#e6e6e6">Обычные</div>
<div class="chev" style="left:1208px;top:569px;width:5px;height:5px"></div>
<div class="t" style="left:1226px;top:570px;font-size:10px;color:#d6d6d6">Непрозрачность:</div>
<div class="a" style="left:1309px;top:565px;width:52px;height:18px;background:#474747;border:1px solid #3e3e3e;border-radius:2px"></div>
<div class="a" style="left:1345px;top:565px;width:1px;height:18px;background:#3e3e3e"></div>
<div class="t" style="left:1314px;top:570px;font-size:10px;color:#f0f0f0">100%</div>
<div class="chev" style="left:1350px;top:569px;width:5px;height:5px"></div>
<div class="a" style="left:1026px;top:588px;width:339px;height:1px;background:#474747"></div>
<div class="t" style="left:1032px;top:597px;font-size:10px;color:#d6d6d6">Закрепить:</div>
<div class="a" style="left:1093px;top:596px;width:11px;height:11px;background:conic-gradient(#9a9a9a 25%,#5a5a5a 0 50%,#9a9a9a 0 75%,#5a5a5a 0);background-size:5.5px 5.5px;border:1px solid #9a9a9a"></div>
<svg class="a" style="left:1114px;top:594px" width="13" height="14" viewBox="0 0 13 14"><path d="M12 1L6 8" stroke="#8a8a8a" stroke-width="2.6" stroke-linecap="round"/><path d="M5 8c-2 0-3 2-3 3.5S1 13 0 13c3 1 6 0 6-3z" fill="#8a8a8a"/></svg>
<svg class="a" style="left:1136px;top:595px" width="13" height="13" viewBox="0 0 13 13"><path d="M6.5 0.5v12M0.5 6.5h12" stroke="#d6d6d6" stroke-width="1.3"/><path d="M4.5 2.5l2-2 2 2M4.5 10.5l2 2 2-2M2.5 4.5l-2 2 2 2M10.5 4.5l2 2-2 2" fill="none" stroke="#d6d6d6" stroke-width="1.3"/></svg>
<svg class="a" style="left:1158px;top:594px" width="14" height="14" viewBox="0 0 14 14"><rect x="2.5" y="3.5" width="8" height="8" fill="none" stroke="#d6d6d6" stroke-width="1.2" stroke-dasharray="2 1"/><path d="M0 3.5h3M2.5 1v3M10.5 11v3M10 11.5h4M10 1l3 0v3" stroke="#d6d6d6" stroke-width="1.2" fill="none"/></svg>
<svg class="a" style="left:1181px;top:594px" width="11" height="14" viewBox="0 0 11 14"><path d="M2.5 6V4a3 3 0 0 1 6 0v2" fill="none" stroke="#d6d6d6" stroke-width="1.6"/><rect x="0.5" y="6" width="10" height="8" fill="#d6d6d6"/><rect x="5" y="8.5" width="1.2" height="3" fill="#535353"/></svg>
<div class="t" style="left:1265px;top:597px;font-size:10px;color:#d6d6d6">Заливка:</div>
<div class="a" style="left:1309px;top:593px;width:52px;height:18px;background:#474747;border:1px solid #3e3e3e;border-radius:2px"></div>
<div class="a" style="left:1345px;top:593px;width:1px;height:18px;background:#3e3e3e"></div>
<div class="t" style="left:1314px;top:598px;font-size:10px;color:#f0f0f0">100%</div>
<div class="chev" style="left:1350px;top:597px;width:5px;height:5px"></div>
<div class="a" style="left:1026px;top:615px;width:323px;height:88px;background:#535353;overflow:hidden">
 <div class="a" style="left:-1026px;top:-615px;width:1365px;height:726px">
  <div class="a" style="left:1026px;top:610px;width:30px;height:22px;background:#5c7d39"></div><div class="a" style="left:1056px;top:610px;width:293px;height:22px;background:#535353"></div><div class="a" style="left:1026px;top:632px;width:323px;height:1px;background:#3f3f3f"></div><svg class="a" style="left:1034px;top:616px" width="15" height="10" viewBox="0 0 15 10"><path d="M1 5C3 1.5 5.5 0.5 7.5 0.5S12 1.5 14 5C12 8.5 9.5 9.5 7.5 9.5S3 8.5 1 5z" fill="#e8e8e8"/><circle cx="7.5" cy="5" r="2.6" fill="#5e7d3a"/><circle cx="7.5" cy="5" r="1.2" fill="#e8e8e8"/></svg><div class="a" style="left:1075px;top:618px;width:6px;height:6px;border-right:1px solid #cfcfcf;border-top:1px solid #cfcfcf;transform:rotate(45deg)"></div><svg class="a" style="left:1087px;top:616px" width="15" height="11" viewBox="0 0 15 11"><path d="M0 0h6l1 1.2h8V11H0z" fill="#e2e2e2"/><path d="M0 2.2h15" stroke="#535353" stroke-width="0.7"/></svg><div class="t" style="left:1115px;top:617.5px;font-size:10px;color:#e6e6e6">Объявления</div>
  <div class="a" style="left:1026px;top:633px;width:30px;height:22px;background:#5c7d39"></div><div class="a" style="left:1056px;top:633px;width:293px;height:22px;background:#535353"></div><div class="a" style="left:1026px;top:655px;width:323px;height:1px;background:#3f3f3f"></div><div class="a" style="left:1036px;top:640px;width:9px;height:9px;border-left:1px solid #3e5226;border-top:1px solid #3e5226"></div><div class="a" style="left:1075px;top:641px;width:6px;height:6px;border-right:1px solid #cfcfcf;border-top:1px solid #cfcfcf;transform:rotate(45deg)"></div><svg class="a" style="left:1087px;top:639px" width="15" height="11" viewBox="0 0 15 11"><path d="M0 0h6l1 1.2h8V11H0z" fill="#e2e2e2"/><path d="M0 2.2h15" stroke="#535353" stroke-width="0.7"/></svg><div class="t" style="left:1115px;top:640.5px;font-size:10px;color:#e6e6e6">Сообщения</div>
  <div class="a" style="left:1026px;top:656px;width:30px;height:22px;background:#5c7d39"></div><div class="a" style="left:1056px;top:656px;width:293px;height:22px;background:#535353"></div><div class="a" style="left:1026px;top:678px;width:323px;height:1px;background:#3f3f3f"></div><svg class="a" style="left:1034px;top:662px" width="15" height="10" viewBox="0 0 15 10"><path d="M1 5C3 1.5 5.5 0.5 7.5 0.5S12 1.5 14 5C12 8.5 9.5 9.5 7.5 9.5S3 8.5 1 5z" fill="#e8e8e8"/><circle cx="7.5" cy="5" r="2.6" fill="#5e7d3a"/><circle cx="7.5" cy="5" r="1.2" fill="#e8e8e8"/></svg><div class="a" style="left:1075px;top:664px;width:6px;height:6px;border-right:1px solid #cfcfcf;border-top:1px solid #cfcfcf;transform:rotate(45deg)"></div><svg class="a" style="left:1087px;top:662px" width="15" height="11" viewBox="0 0 15 11"><path d="M0 0h6l1 1.2h8V11H0z" fill="#e2e2e2"/><path d="M0 2.2h15" stroke="#535353" stroke-width="0.7"/></svg><div class="t" style="left:1115px;top:663.5px;font-size:10px;color:#e6e6e6">Платежи и счёт</div>
  <div class="a" style="left:1026px;top:679px;width:30px;height:22px;background:#5c7d39"></div><div class="a" style="left:1056px;top:679px;width:293px;height:22px;background:#535353"></div><div class="a" style="left:1026px;top:701px;width:323px;height:1px;background:#3f3f3f"></div><div class="a" style="left:1036px;top:686px;width:9px;height:9px;border-left:1px solid #3e5226;border-top:1px solid #3e5226"></div><div class="a" style="left:1075px;top:687px;width:6px;height:6px;border-right:1px solid #cfcfcf;border-top:1px solid #cfcfcf;transform:rotate(45deg)"></div><svg class="a" style="left:1087px;top:685px" width="15" height="11" viewBox="0 0 15 11"><path d="M0 0h6l1 1.2h8V11H0z" fill="#e2e2e2"/><path d="M0 2.2h15" stroke="#535353" stroke-width="0.7"/></svg><div class="t" style="left:1115px;top:686.5px;font-size:10px;color:#e6e6e6">Настройки</div>
 </div>
</div>
<div class="a" style="left:1349px;top:615px;width:16px;height:88px;background:#4a4a4a"></div>
<div class="a" style="left:1354px;top:625px;width:6px;height:6px;border-left:1px solid #9a9a9a;border-top:1px solid #9a9a9a;transform:rotate(45deg)"></div>
<div class="a" style="left:1352px;top:664px;width:11px;height:12px;background:#6a6a6a"></div>
<div class="a" style="left:1354px;top:687px;width:6px;height:6px;border-right:1px solid #9a9a9a;border-bottom:1px solid #9a9a9a;transform:rotate(45deg)"></div>
<div class="a" style="left:1026px;top:703px;width:339px;height:23px;background:#535353;border-top:1px solid #474747"></div>
<svg class="a" style="left:1161px;top:709px" width="16" height="10" viewBox="0 0 16 10"><rect x="0.8" y="1.5" width="8" height="7" rx="3.5" fill="none" stroke="#8a8a8a" stroke-width="1.5"/><rect x="7" y="1.5" width="8" height="7" rx="3.5" fill="none" stroke="#8a8a8a" stroke-width="1.5"/></svg>
<div class="t" style="left:1190px;top:705px;font-size:15px;font-style:italic;font-family:'Liberation Serif',serif;color:#d6d6d6">fx</div>
<div class="a" style="left:1196px;top:720px;width:0;height:0;border-left:3px solid transparent;border-right:3px solid transparent;border-top:3px solid #ddd"></div>
<div class="a" style="left:1216px;top:708px;width:14px;height:12px;background:#e0e0e0;border-radius:1px"></div>
<div class="a" style="left:1219.5px;top:710px;width:7px;height:7px;background:#535353;border-radius:50%"></div>
<svg class="a" style="left:1244px;top:708px" width="12" height="12" viewBox="0 0 12 12"><circle cx="6" cy="6" r="5.3" fill="none" stroke="#d6d6d6" stroke-width="1.2"/><path d="M10 2L2 10A5.3 5.3 0 0 0 10 2z" fill="#d6d6d6"/></svg>
<div class="a" style="left:1249px;top:720px;width:0;height:0;border-left:3px solid transparent;border-right:3px solid transparent;border-top:3px solid #ddd"></div>
<svg class="a" style="left:1270px;top:708px" width="14" height="12" viewBox="0 0 14 12"><path d="M0 0h5l1 1.5h8V12H0z" fill="#e2e2e2"/><path d="M0 3h14" stroke="#535353" stroke-width="0.8"/></svg>
<svg class="a" style="left:1298px;top:707px" width="12" height="14" viewBox="0 0 12 14"><path d="M0.6 3.6h7.8v9.8H0.6z" fill="none" stroke="#d6d6d6" stroke-width="1.2"/><path d="M3 0.6h8.4v9.8" fill="none" stroke="#d6d6d6" stroke-width="1.2"/><path d="M1 13l4-4v4z" fill="#d6d6d6"/></svg>
<svg class="a" style="left:1324px;top:707px" width="12" height="14" viewBox="0 0 12 14"><path d="M0.5 2.5h11M4 2.5V1h4v1.5M1.8 3.5v10h8.4v-10M4.3 5.5v6M7.7 5.5v6" fill="none" stroke="#d6d6d6" stroke-width="1.2"/></svg>

</body></html>
